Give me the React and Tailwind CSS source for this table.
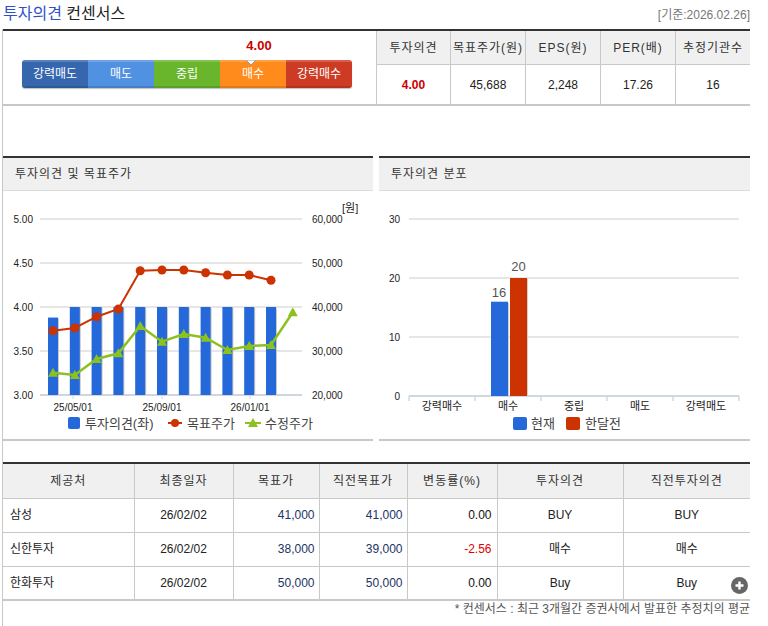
import React from 'react';

const SVG_FONT = 'Liberation Sans, Noto Sans CJK KR, sans-serif';

const segments = [
  { label: '강력매도', bg: 'bg-[#3566ae]' },
  { label: '매도', bg: 'bg-[#5191e2]' },
  { label: '중립', bg: 'bg-[#69b52c]' },
  { label: '매수', bg: 'bg-[#ff8b1c]' },
  { label: '강력매수', bg: 'bg-[#cd3b24]' },
];

const summary = [
  { head: '투자의견', value: '4.00', strong: true },
  { head: '목표주가(원)', value: '45,688' },
  { head: 'EPS(원)', value: '2,248' },
  { head: 'PER(배)', value: '17.26' },
  { head: '추정기관수', value: '16' },
];

const rows = [
  { name: '삼성', date: '26/02/02', target: '41,000', prev: '41,000', rate: '0.00', op: 'BUY', prevOp: 'BUY' },
  { name: '신한투자', date: '26/02/02', target: '38,000', prev: '39,000', rate: '-2.56', op: '매수', prevOp: '매수' },
  { name: '한화투자', date: '26/02/02', target: '50,000', prev: '50,000', rate: '0.00', op: 'Buy', prevOp: 'Buy', more: true },
];

// opinion bars, target price & adjusted price (svg coords)
const opinion = [3.88, 4, 4, 4, 4, 4, 4, 4, 4, 4, 4];
const targetY = [139.7, 137, 125.7, 118, 79.7, 79, 79, 81.7, 84, 84, 89.3];
const priceY = [181.7, 184, 168, 162.3, 135, 150.7, 143, 146.7, 159, 155, 154, 121.3];
const cx = (i) => 50 + i * 21.8;

const OpinionChart = () => {
  const grid = [28, 72, 116, 160, 204];
  const left = ['5.00', '4.50', '4.00', '3.50', '3.00'];
  const right = ['60,000', '50,000', '40,000', '30,000', '20,000'];
  return (
    <svg className="block" width="370" height="248" fontFamily={SVG_FONT}>
      {grid.map((y, i) => (
        <g key={y}>
          <line x1="37" x2="299" y1={y} y2={y} stroke={i === 4 ? '#cfd6dc' : '#e6e6e6'} strokeWidth="2" />
          <text x="30" y={y + 4} fontSize="10" textAnchor="end" fill="#222">{left[i]}</text>
          <text x="309" y={y + 4} fontSize="10" fill="#222">{right[i]}</text>
        </g>
      ))}
      <text x="339" y="21" fontSize="11" fill="#222">[원]</text>
      {opinion.map((v, i) => {
        const top = 204 - (v - 3) * 88;
        return (
          <g key={i}>
            <rect x={cx(i) - 4} y={top + 1} width="10" height={204 - top - 1} fill="#c9c9c9" />
            <rect x={cx(i) - 5} y={top} width="10" height={204 - top} fill="#2468d9" />
          </g>
        );
      })}
      <polyline
        points={targetY.map((y, i) => `${cx(i)},${y}`).join(' ')}
        fill="none"
        stroke="#cc3300"
        strokeWidth="2"
      />
      {targetY.map((y, i) => (
        <circle key={i} cx={cx(i)} cy={y} r="4.5" fill="#cc3300" />
      ))}
      <polyline
        points={priceY.map((y, i) => `${cx(i)},${y}`).join(' ')}
        fill="none"
        stroke="#8cc21e"
        strokeWidth="2.5"
      />
      {priceY.map((y, i) => (
        <polygon key={i} points={`${cx(i)},${y - 5} ${cx(i) + 5},${y + 4} ${cx(i) - 5},${y + 4}`} fill="#8cc21e" />
      ))}
      {[
        [70, '25/05/01'],
        [159, '25/09/01'],
        [247, '26/01/01'],
      ].map(([x, t]) => (
        <g key={t}>
          <line x1={x} x2={x} y1="204" y2="208" stroke="#cfd6dc" />
          <text x={x} y="220" fontSize="10" textAnchor="middle" fill="#222">{t}</text>
        </g>
      ))}
      <rect x="65" y="226" width="12" height="12" rx="2" fill="#2468d9" />
      <text x="82" y="237" fontSize="13" fill="#444">투자의견(좌)</text>
      <line x1="165" x2="179" y1="232" y2="232" stroke="#cc3300" strokeWidth="2" />
      <circle cx="172" cy="232" r="4" fill="#cc3300" />
      <text x="184" y="237" fontSize="13" fill="#444">목표주가</text>
      <line x1="242" x2="258" y1="232" y2="232" stroke="#8cc21e" strokeWidth="2" />
      <polygon points="250,227 255,236 245,236" fill="#8cc21e" />
      <text x="262" y="237" fontSize="13" fill="#444">수정주가</text>
    </svg>
  );
};

const DistributionChart = () => {
  const grid = [
    [28, '30'],
    [87, '20'],
    [146, '10'],
    [205, '0'],
  ];
  const cats = ['강력매수', '매수', '중립', '매도', '강력매도'];
  return (
    <svg className="block" width="371" height="248" fontFamily={SVG_FONT}>
      {grid.map(([y, t]) => (
        <g key={t}>
          <line x1="30" x2="360" y1={y} y2={y} stroke={t === '0' ? '#cfd8e2' : '#e6e6e6'} strokeWidth="2" />
          <text x="21" y={y + 4} fontSize="10" textAnchor="end" fill="#222">{t}</text>
        </g>
      ))}
      {[30, 96, 162, 228, 294, 360].map((x) => (
        <line key={x} x1={x} x2={x} y1="205" y2="210" stroke="#cfd8e2" strokeWidth="1.5" />
      ))}
      {cats.map((c, i) => (
        <text key={c} x={63 + i * 66} y="219" fontSize="11" textAnchor="middle" fill="#222">{c}</text>
      ))}
      <rect x="113" y="112" width="17" height="93" fill="#cfcfcf" />
      <rect x="112" y="110.7" width="17" height="94.3" fill="#2468d9" />
      <rect x="132" y="88" width="17" height="117" fill="#cfcfcf" />
      <rect x="131" y="87" width="17" height="118" fill="#cc3300" />
      <text x="120" y="106" fontSize="13" textAnchor="middle" fill="#555">16</text>
      <text x="139.5" y="80" fontSize="13" textAnchor="middle" fill="#555">20</text>
      <rect x="134" y="226" width="14" height="13" rx="2" fill="#2468d9" />
      <text x="152" y="237" fontSize="13" fill="#444">현재</text>
      <rect x="187" y="226" width="14" height="13" rx="2" fill="#cc3300" />
      <text x="206" y="237" fontSize="13" fill="#444">한달전</text>
    </svg>
  );
};

const Panel = ({ title, children, className }) => (
  <div className={`border-t-2 border-b-2 border-t-[#333] border-b-[#c8c8c8] ${className}`}>
    <div className="h-[33px] bg-[#f0f0f0] border-b border-[#dcdcdc] flex items-center pl-[12px] text-[12px] text-[#333] tracking-[1px]">
      {title}
    </div>
    {children}
  </div>
);

const App = () => {
  return (
    <div className="w-[750px] bg-white text-[#222] font-['Liberation_Sans','Noto_Sans_CJK_KR',sans-serif]">
      <div className="h-[29px] flex items-center justify-between pl-[3px]">
        <div className="text-[16px] leading-none pb-[2px]">
          <span className="text-[#2f50cc]">투자의견</span> <span className="text-[#222]">컨센서스</span>
        </div>
        <div className="text-[12px] text-[#777]">[기준:2026.02.26]</div>
      </div>

      <div className="ml-[2px] border-l border-[#c8c8c8] pb-[12px]">
        {/* summary */}
        <div className="flex border-t-2 border-[#333] border-b-2 border-b-[#c8c8c8]">
          <div className="w-[374px] pl-[19px] pt-[8px]">
            <div className="relative w-[330px] h-[21px]">
              <span className="absolute left-[204px] top-0 w-[66px] text-center text-[13px] font-bold text-[#cc0000] leading-none">
                4.00
              </span>
            </div>
            <div className="relative flex w-[330px] h-[28px] rounded-[3px] overflow-hidden shadow-[0_1px_1px_rgba(0,0,0,0.25)]">
              {segments.map((s) => (
                <div
                  key={s.label}
                  className={`w-[66px] flex items-center justify-center text-[12px] text-white ${s.bg} shadow-[inset_0_2px_0_rgba(255,255,255,0.18),inset_0_-2px_0_rgba(0,0,0,0.12)]`}
                >
                  {s.label}
                </div>
              ))}
              <svg className="absolute left-[224px] top-0" width="10" height="6">
                <polygon points="0,0 10,0 5,5" fill="#fff" stroke="#999" strokeWidth="1" />
              </svg>
            </div>
          </div>
          <div className="flex-1 grid grid-cols-[73px_75px_75px_75px_75px] border-l border-[#c8c8c8]">
            {summary.map((c, i) => (
              <div
                key={c.head}
                className={`h-[34px] bg-[#f0f0f0] border-b border-[#c8c8c8] flex items-center justify-center text-[12px] text-[#333] tracking-[1px] ${i > 0 ? 'border-l' : ''}`}
              >
                {c.head}
              </div>
            ))}
            {summary.map((c, i) => (
              <div
                key={c.head + 'v'}
                className={`h-[39px] flex items-center justify-center text-[12px] border-[#c8c8c8] ${i > 0 ? 'border-l' : ''} ${c.strong ? 'font-bold text-[#cc0000]' : 'text-[#222]'}`}
              >
                {c.value}
              </div>
            ))}
          </div>
        </div>

        <div className="h-[50px]" />

        {/* charts */}
        <div className="flex justify-between">
          <Panel title="투자의견 및 목표주가" className="w-[370px]">
            <OpinionChart />
          </Panel>
          <Panel title="투자의견 분포" className="w-[371px]">
            <DistributionChart />
          </Panel>
        </div>

        <div className="h-[21px]" />

        {/* provider table */}
        <table className="w-[747px] table-fixed border-collapse text-[12px] border-t-2 border-t-[#333] border-b-2 border-b-[#c8c8c8]">
          <colgroup>
            <col className="w-[131px]" />
            <col className="w-[99px]" />
            <col className="w-[86px]" />
            <col className="w-[88px]" />
            <col className="w-[90px]" />
            <col className="w-[126px]" />
            <col className="w-[127px]" />
          </colgroup>
          <thead>
            <tr className="h-[35px] bg-[#f0f0f0] text-[#333] tracking-[1px]">
              {['제공처', '최종일자', '목표가', '직전목표가', '변동률(%)', '투자의견', '직전투자의견'].map((h, i) => (
                <th key={h} className={`font-normal border-b border-[#c8c8c8] ${i > 0 ? 'border-l' : ''}`}>
                  {h}
                </th>
              ))}
            </tr>
          </thead>
          <tbody>
            {rows.map((r, i) => (
              <tr key={r.name} className={`h-[34px] ${i > 0 ? 'border-t border-[#c8c8c8]' : ''}`}>
                <td className="pl-[7px] text-[#222]">{r.name}</td>
                <td className="border-l border-[#c8c8c8] text-center text-[#222]">{r.date}</td>
                <td className="border-l border-[#c8c8c8] text-right pr-[4px] text-[#223366]">{r.target}</td>
                <td className="border-l border-[#c8c8c8] text-right pr-[4px] text-[#223366]">{r.prev}</td>
                <td className={`border-l border-[#c8c8c8] text-right pr-[5px] ${r.rate.startsWith('-') ? 'text-[#e00000]' : 'text-[#111]'}`}>
                  {r.rate}
                </td>
                <td className="border-l border-[#c8c8c8] text-center text-[#222]">{r.op}</td>
                <td className="relative border-l border-[#c8c8c8] text-center text-[#222]">
                  {r.prevOp}
                  {r.more && (
                    <span className="absolute right-[2px] top-[10px] w-[17px] h-[17px] rounded-full bg-[#666] flex items-center justify-center">
                      <svg width="11" height="11" viewBox="0 0 11 11">
                        <path d="M5.5 1.5v8M1.5 5.5h8" stroke="#fff" strokeWidth="2.4" />
                      </svg>
                    </span>
                  )}
                </td>
              </tr>
            ))}
          </tbody>
        </table>
        <div className="h-[16px] flex items-center justify-end text-[12px] text-[#555]">
          * 컨센서스 : 최근 3개월간 증권사에서 발표한 추정치의 평균
        </div>
      </div>
    </div>
  );
};

export default App;
